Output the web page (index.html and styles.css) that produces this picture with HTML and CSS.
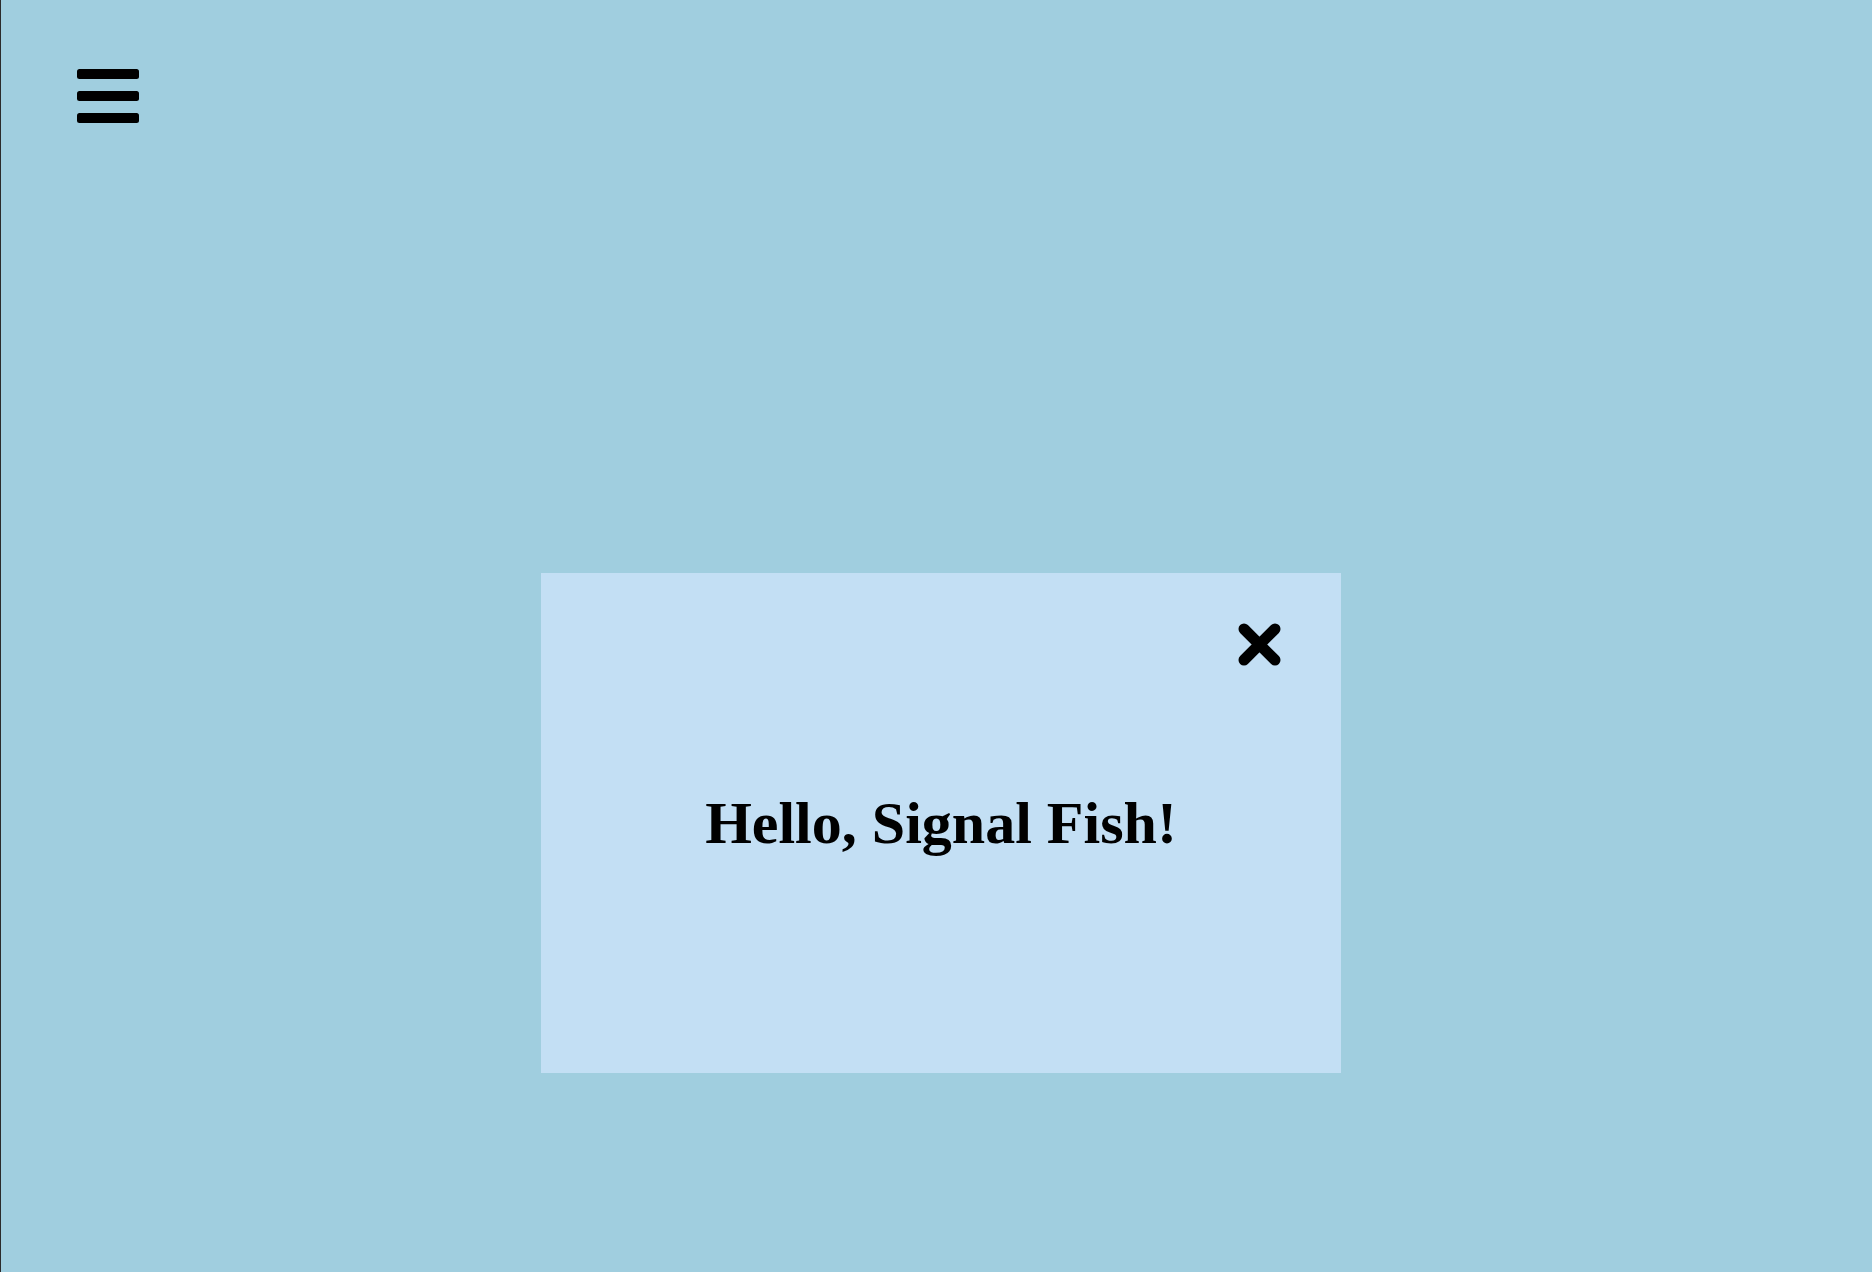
FILE: index.html
```html
<!DOCTYPE html>
<html lang="en">
<head>
<meta charset="utf-8">
<title>Signal Fish</title>
<link rel="stylesheet" href="styles.css">
</head>
<body>
<div class="page">
  <header class="topbar">
    <button class="menu-btn" aria-label="Menu">
      <svg width="62" height="54" viewBox="0 0 62 54" aria-hidden="true">
        <rect x="0" y="0" width="62" height="10" rx="2.5"/>
        <rect x="0" y="22" width="62" height="10" rx="2.5"/>
        <rect x="0" y="44" width="62" height="10" rx="2.5"/>
      </svg>
    </button>
  </header>
  <main class="stage">
    <section class="modal">
      <button class="close-btn" aria-label="Close">
        <svg width="43" height="43" viewBox="0 0 43 43" aria-hidden="true">
          <path d="M6 6 L37 37 M37 6 L6 37" stroke="#000" stroke-width="11" stroke-linecap="round" fill="none"/>
        </svg>
      </button>
      <h1 class="greeting">Hello, Signal Fish!</h1>
    </section>
  </main>
</div>
</body>
</html>
```
FILE: styles.css
```css
html, body {
  margin: 0;
  padding: 0;
  height: 100%;
}
body {
  background: #a0cedf;
  font-family: "Liberation Serif", "Times New Roman", serif;
  overflow: hidden;
}
.page {
  min-height: 100vh;
  box-sizing: border-box;
  border-left: 1px solid #2b2b2b;
  background: #a0cedf;
}
.topbar {
  display: flex;
  padding: 69px 0 0 76px;
  height: 54px;
}
.menu-btn {
  border: 0;
  padding: 0;
  margin: 0;
  background: none;
  display: block;
  line-height: 0;
  cursor: pointer;
}
.menu-btn svg rect {
  fill: #000;
}
.stage {
  display: flex;
  justify-content: center;
  padding: 450px 0 0 9px;
}
.modal {
  position: relative;
  width: 800px;
  height: 500px;
  background: #c3dff4;
  display: flex;
  align-items: center;
  justify-content: center;
}
.close-btn {
  position: absolute;
  top: 50px;
  right: 60px;
  border: 0;
  padding: 0;
  margin: 0;
  background: none;
  line-height: 0;
  cursor: pointer;
}
.greeting {
  margin: 0;
  font-size: 60px;
  font-weight: bold;
  color: #000;
  line-height: 1;
}
```
